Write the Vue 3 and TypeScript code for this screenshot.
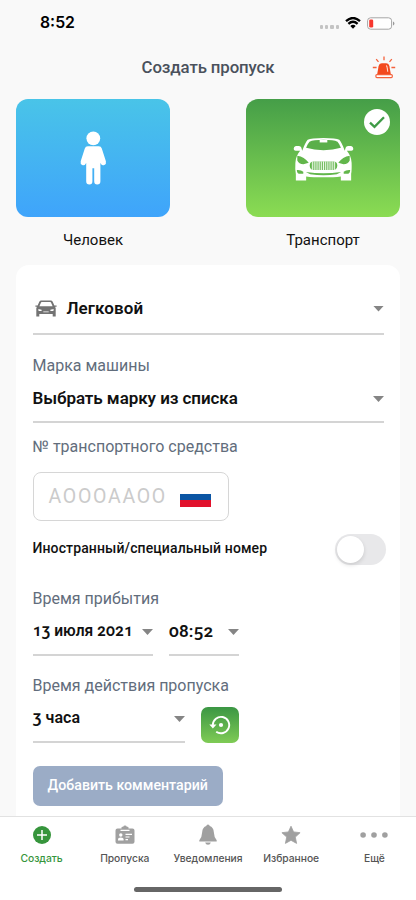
<script setup lang="ts">
import { ref } from 'vue'

type PassKind = 'person' | 'transport'

const kind = ref<PassKind>('transport')
const foreignNumber = ref(false)
const activeTab = ref('create')

const tabs = [
  { id: 'create', label: 'Создать' },
  { id: 'passes', label: 'Пропуска' },
  { id: 'alerts', label: 'Уведомления' },
  { id: 'favorites', label: 'Избранное' },
  { id: 'more', label: 'Ещё' },
]
const grille = Array.from({ length: 13 }, (_, i) => 20.3 + i * 1.95)
</script>

<template>
  <div class="screen">
    <div class="status">
      <span class="clock">8:52</span>
      <div class="indicators">
        <span class="signal"><i v-for="n in 4" :key="n"></i></span>
        <svg class="wifi" width="16" height="12" viewBox="0 0 16 12">
          <path d="M1 4.2Q8-2.2 15 4.2M3.4 6.8Q8 2.6 12.6 6.8" fill="none" stroke="#000" stroke-width="2.3" />
          <path d="M5.3 8.9Q8 6.5 10.7 8.9L8 11.8Z" fill="#000" />
        </svg>
        <svg class="battery" width="28" height="13" viewBox="0 0 28 13">
          <rect x=".6" y=".8" width="24" height="11.4" rx="3" fill="#fff" stroke="#a5a5a5" />
          <rect x="2.2" y="2.4" width="4" height="8.2" rx="1.3" fill="#f7372f" />
          <path d="M26 4.6q1.4.5 1.4 1.9T26 8.4Z" fill="#999" />
        </svg>
      </div>
    </div>

    <header class="header">
      <h1>Создать пропуск</h1>
      <svg class="siren" width="24" height="23" viewBox="0 0 24 23">
        <path d="M12 .5V4.3M4.2 3.2l2.3 2.7M19.8 3.2l-2.3 2.7M.8 11.5h3.8M19.4 11.5h3.8" fill="none" stroke="#f4623c" stroke-width="1.3" />
        <path d="M5.2 18 6.600 10.200Q7.200 7.300 10 7.300h4q2.800 0 3.400 2.900L18.800 18Z" fill="#f34a1f" />
        <path d="M14.200 9.500q.9.500 1.200 3.400l.3 2.900" fill="none" stroke="#ffd9cc" stroke-width="1.100" />
        <rect x="3.900" y="18.600" width="16.400" height="3" rx="1" fill="#fff" stroke="#f4623c" stroke-width="1.200" />
      </svg>
    </header>

    <div class="kinds">
      <button class="kind" @click="kind = 'person'">
        <span class="tile person">
          <svg width="28" height="54" viewBox="0 0 28 54">
            <circle cx="14.300" cy="7.300" r="6.900" fill="#fff" />
            <path d="M8.800 15.200h11q2.300 0 3 2.200l4.100 12.800q.6 2.900-1.500 3.900-2.500.7-3.500-1.400l-.5-1V50.300q0 3.200-3.200 3.200-3 0-3-3.200V37.200h-1.800V50.300q0 3.200-3 3.200-3.200 0-3.200-3.200V31.700l-.5 1q-1 2.100-3.500 1.400-2.100-1-1.500-3.900L5.800 17.400q.7-2.200 3-2.200Z" fill="#fff" />
          </svg>
          <span v-if="kind === 'person'" class="check"></span>
        </span>
        <span class="kind-name">Человек</span>
      </button>
      <button class="kind" @click="kind = 'transport'">
        <span class="tile transport">
          <svg class="car" width="61" height="44" viewBox="0 0 64 46" preserveAspectRatio="none">
            <path d="M9.700 14.500Q12.800 6 15.400 3 19 1 32 1t16.600 2q2.600 3 5.700 11.500l.5-1.800q.6-3.200 3.200-3.200h3q2.300.5 2.300 3-.2 1.900-2 1.900h-4.800q4.700 5.400 5 12.600.3 8-.5 11.500V45.500H50.200V41.200Q43 42.200 32 42.200T13.800 41.200V45.500H3V39Q2 34 2.500 27q.3-7.200 5-12.600H2.700Q1 14.400.7 12.500q0-2.500 2.300-3h3q2.600 0 3.200 3.200Z" fill="#fff" />
            <path class="cut glass" d="M17.300 5q4-2 14.700-2t14.700 2q2 2.200 3.600 6.300-8.300 2.600-18.300 2.600t-18.300-2.600Q15.300 7.200 17.300 5Z" />
            <path d="M28 3h8v2.700h-8z" fill="#fff" />
            <path class="cut" d="M4.500 19.500Q12 20.500 16.500 27l-5.500 1.600q-5-.5-6.500-4ZM59.500 19.500Q52 20.500 47.500 27l5.500 1.600q5-.5 6.500-4Z" />
            <path class="cut" d="M21.500 25.500h21q3.800 0 4 4.400-.3 4.700-4 4.700h-21q-3.700 0-4-4.700.2-4.400 4-4.400Z" />
            <path v-for="x in grille" :key="x" :d="`M${x} 25.500v9`" stroke="#fff" stroke-width=".95" />
            <path class="cut" d="M4 34.500q4.500-.3 6.800 1.700v2.300H6.500Q4.200 38 4 34.500ZM60 34.500q-4.500-.3-6.800 1.700v2.300h4.300q2.300-.5 2.500-4ZM13.500 36.500Q23 38 32 38t18.500-1.500L46 39Q39 40 32 40t-14-1Z" />
          </svg>
          <span v-if="kind === 'transport'" class="check">
            <svg width="16" height="13" viewBox="0 0 16 13"><path d="m1 6.600 4.500 4.300L15 1.300" fill="none" stroke="#3f9b47" stroke-width="2.300" /></svg>
          </span>
        </span>
        <span class="kind-name">Транспорт</span>
      </button>
    </div>

    <main class="card">
      <div class="select type">
        <svg class="mini-car" width="22" height="17" viewBox="0 0 22 17">
          <path d="M6.200.6h9.600q1.300 0 1.900 1.200L19.400 5.400h2.200v1.300h-1.500l.6 1.500V16.400h-3V13.900H4.300v2.500h-3V8.200l.6-1.500H.4V5.400h2.200L4.300 1.800Q4.900.6 6.200.6Z" fill="#737373" />
          <path d="M6.700 2.100h8.600q.5 0 .8.600l1.500 3.500H4.400l1.500-3.500q.3-.6.800-.6Z" fill="#fff" />
          <path d="M3.300 8.900 6.600 9.700v1.300H3.600ZM18.700 8.900l-3.300.8v1.300h3ZM8.300 11.500h5.400v.8H8.300Z" fill="#fff" />
        </svg>
        <span class="value">Легковой</span><i class="caret"></i>
      </div>

      <label class="caption brand-caption">Марка машины</label>
      <div class="select brand"><span class="value">Выбрать марку из списка</span><i class="caret"></i></div>

      <label class="caption plate-caption">№ транспортного средства</label>
      <div class="plate">
        <span class="mask">AOOOAAOO</span>
        <span class="flag"></span>
      </div>

      <div class="foreign">
        <span class="foreign-name">Иностранный/специальный номер</span>
        <button class="switch" :class="{ on: foreignNumber }" @click="foreignNumber = !foreignNumber"></button>
      </div>

      <label class="caption">Время прибытия</label>
      <div class="arrival">
        <div class="select date"><span class="value">13 июля 2021</span><i class="caret"></i></div>
        <div class="select time"><span class="value">08:52</span><i class="caret"></i></div>
      </div>

      <label class="caption duration-caption">Время действия пропуска</label>
      <div class="duration">
        <div class="select hours"><span class="value">3 часа</span><i class="caret"></i></div>
        <button class="restore">
          <svg width="22" height="20" viewBox="0 0 22 20">
            <path d="M3.800 10A8.200 8.200 0 1 1 7.200 16.700" fill="none" stroke="#fff" stroke-width="1.900" />
            <path d="M.3 9.500h7.200L3.900 13.600Z" fill="#fff" />
            <circle cx="12" cy="10" r="2.100" fill="#fff" />
          </svg>
        </button>
      </div>

      <button class="comment">Добавить комментарий</button>
    </main>

    <nav class="tabbar">
      <button v-for="tab in tabs" :key="tab.id" class="tab" :class="{ active: tab.id === activeTab }" @click="activeTab = tab.id">
        <svg width="30" height="22" viewBox="0 0 30 22">
          <g v-if="tab.id === 'create'">
            <circle cx="15" cy="11" r="9" fill="currentColor" />
            <path d="M15 6v10M10 11h10" stroke="#fff" stroke-width="1.500" />
          </g>
          <g v-else-if="tab.id === 'passes'">
            <path d="M7.500 4.500h4V3.600q0-.9.900-.9h.8Q13.500 1.500 15 1.500t1.800 1.200h.8q.9 0 .9.900v.9h4q2 0 2 2v11.300q0 2-2 2h-15q-2 0-2-2V6.500q0-2 2-2Z" fill="currentColor" />
            <path d="M10.500 6.400h9M15.500 10.300h6.500M15.500 13h4M15.500 15.700h2.500" stroke="#fff" stroke-width="1.200" />
            <circle cx="10.800" cy="11" r="1.700" fill="#fff" />
            <path d="M8 16.400v-1q0-2 2.800-2t2.800 2v1Z" fill="#fff" />
          </g>
          <g v-else-if="tab.id === 'alerts'" fill="currentColor">
            <path d="M15 .6q1.600 0 1.700 1.500 3.800 1.300 4.100 6 .2 5.200 2.900 8.100v1.300H6.300v-1.300q2.700-2.900 2.900-8.100.3-4.700 4.100-6Q13.400.6 15 .6Z" />
            <path d="M12.200 18.400h5.600q-.5 2.400-2.800 2.400t-2.800-2.400Z" />
          </g>
          <path v-else-if="tab.id === 'favorites'" d="m15 2.200 2.600 5.700 6.500.8-4.800 4.400 1.300 6.300L15 16.300l-5.600 3.100 1.300-6.300-4.800-4.400 6.500-.8Z" fill="currentColor" stroke="currentColor" stroke-width=".8" stroke-linejoin="round" />
          <g v-else fill="currentColor">
            <circle cx="4.100" cy="11" r="2.800" /><circle cx="15" cy="11" r="2.800" /><circle cx="25.900" cy="11" r="2.800" />
          </g>
        </svg>
        <span>{{ tab.label }}</span>
      </button>
      <i class="home"></i>
    </nav>
  </div>
</template>

<style>
body {
  margin: 0;
  background: #f9f9f9;
}
</style>

<style scoped>
.screen {
  display: flex;
  flex-direction: column;
  height: 900px;
  overflow: hidden;
  background: #f9f9f9;
  color: #111;
  font-family: Roboto, "Noto Sans", sans-serif;
  font-feature-settings: "onum";
  white-space: nowrap;
}
button {
  padding: 0;
  border: 0;
  background: none;
  color: inherit;
  font: inherit;
  letter-spacing: inherit;
}
svg {
  display: block;
  flex: none;
}
.status {
  display: flex;
  justify-content: space-between;
  height: 46px;
  padding: 0 21px 0 40px;
  box-sizing: border-box;
}
.clock {
  font: 600 15.8px/46px Inter, sans-serif;
  color: #000;
}
.indicators {
  display: flex;
  align-items: center;
}
.signal {
  display: flex;
  gap: 2px;
  margin: 8px 6px 0 0;
}
.signal i {
  width: 3.3px;
  height: 3.3px;
  border-radius: 1px;
  background: #c4c4c4;
}
.wifi {
  margin-right: 6px;
}
.header {
  display: flex;
  align-items: center;
  height: 42px;
  padding: 0 20px 0 44px;
}
h1 {
  flex: 1;
  margin: 0;
  padding-bottom: 1px;
  text-align: center;
  font-size: 16.8px;
  font-weight: 500;
  letter-spacing: -.1px;
  color: #4a515c;
}
.kinds {
  display: flex;
  justify-content: space-between;
  padding: 11px 16px 0;
}
.kind {
  width: 154px;
}
.tile {
  position: relative;
  display: flex;
  align-items: center;
  justify-content: center;
  height: 118px;
  border-radius: 12px;
}
.person {
  background: linear-gradient(#49c4e8, #3fa4fb);
}
.transport {
  background: linear-gradient(#459e48, #8bdc53);
}
.car {
  margin-top: 2px;
}
.cut {
  fill: #62b64b;
}
.glass {
  fill: #5aaf4a;
}
.check {
  position: absolute;
  top: 10px;
  right: 10px;
  display: flex;
  align-items: center;
  justify-content: center;
  width: 26px;
  height: 26px;
  border-radius: 50%;
  background: #fff;
}
.kind-name {
  display: block;
  margin-top: 12px;
  font-size: 15px;
  line-height: 23px;
}
.card {
  flex: 1;
  min-height: 0;
  box-sizing: border-box;
  margin: 13px 16px 0;
  padding: 16px 16px 0 16.5px;
  overflow: hidden;
  border-radius: 13px 13px 0 0;
  background: #fff;
}
.select {
  display: flex;
  align-items: center;
  justify-content: space-between;
  box-sizing: border-box;
  border-bottom: 2px solid #d4d4d4;
}
.value {
  font-size: 17px;
  font-weight: 600;
  line-height: 24px;
}
.caret {
  width: 11px;
  height: 6px;
  background: #858585;
  clip-path: polygon(0 0, 100% 0, 50% 100%);
}
.type {
  height: 54px;
}
.type .value {
  flex: 1;
  padding-top: 1px;
  letter-spacing: .1px;
}
.type .caret {
  margin-top: 3px;
}
.mini-car {
  margin: 2px 10px 0 2px;
}
.caption {
  display: block;
  height: 24px;
  font-size: 16px;
  line-height: 26px;
  color: #626d7c;
}
.brand-caption {
  margin-top: 18px;
}
.brand {
  height: 46px;
  padding-bottom: 3px;
}
.brand .value {
  letter-spacing: -.07px;
}
.brand .caret {
  margin-top: 3px;
}
.plate-caption {
  margin-top: 11px;
}
.plate {
  display: flex;
  align-items: center;
  justify-content: space-between;
  box-sizing: border-box;
  width: 196px;
  height: 49px;
  margin-top: 14px;
  padding: 0 17px 0 15px;
  border: 1px solid #d6d6d6;
  border-radius: 8px;
}
.mask {
  font-size: 19.5px;
  letter-spacing: 1.7px;
  color: #cbcbcb;
}
.flag {
  width: 30.5px;
  height: 20px;
  background: linear-gradient(#fff 33%, #0b55a4 33% 66%, #e1112c 66%);
}
.foreign {
  display: flex;
  align-items: center;
  justify-content: space-between;
  height: 32px;
  margin: 12px -2px 21px 0;
}
.foreign-name {
  padding-bottom: 2px;
  font-size: 14px;
  font-weight: 500;
  letter-spacing: .12px;
}
.switch {
  width: 51px;
  height: 31px;
  padding: 2px;
  border-radius: 16px;
  background: #e8e8ea;
}
.switch::before {
  content: "";
  display: block;
  width: 27px;
  height: 27px;
  border-radius: 50%;
  background: #fff;
  box-shadow: 0 2px 4px rgba(0, 0, 0, .13);
}
.switch.on {
  background: #3d9e46;
}
.switch.on::before {
  margin-left: auto;
}
.arrival {
  display: flex;
  gap: 16px;
}
.date,
.time {
  height: 46px;
  padding-bottom: 4px;
}
.date {
  width: 120.5px;
}
.date .value,
.time .value,
.hours .value {
  padding-top: 2px;
}
.date .value {
  font-size: 15.6px;
}
.time {
  width: 70px;
}
.time .value {
  letter-spacing: .2px;
}
.arrival .caret {
  margin-top: 4px;
}
.duration-caption {
  margin-top: 17px;
}
.duration {
  display: flex;
  gap: 16px;
}
.hours {
  width: 152.5px;
  height: 46px;
  padding-bottom: 5px;
}
.hours .caret {
  margin-top: 5px;
}
.hours .value {
  font-size: 16px;
}
.restore {
  display: flex;
  align-items: center;
  justify-content: center;
  width: 38px;
  height: 36px;
  margin-top: 10px;
  border-radius: 7px;
  background: linear-gradient(#3b9644, #7fcb55);
}
.comment {
  width: 190.5px;
  height: 40px;
  margin-top: 22.5px;
  padding-bottom: 2px;
  border-radius: 7px;
  background: #9bacc6;
  color: #fff;
  font-size: 14.2px;
  font-weight: 500;
}
.tabbar {
  position: relative;
  display: grid;
  grid-template-columns: repeat(5, 1fr);
  box-sizing: border-box;
  height: 84px;
  padding-top: 7px;
  border-top: 1px solid #e2e2e2;
  background: #fff;
}
.tab {
  display: flex;
  flex-direction: column;
  align-items: center;
  color: #a0a0a0;
}
.tab span {
  margin-top: 5px;
  font: 500 10.3px/14px Inter, sans-serif;
  letter-spacing: -.02px;
  color: #555;
}
.tab.active,
.tab.active span {
  color: #36953c;
}
.home {
  position: absolute;
  left: 134px;
  bottom: 8.5px;
  width: 148px;
  height: 5px;
  border-radius: 3px;
  background: #666;
}
</style>
